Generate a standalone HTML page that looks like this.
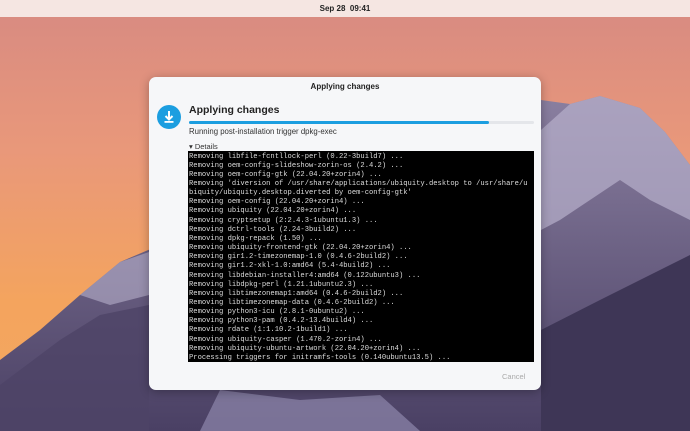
<!DOCTYPE html>
<html><head><meta charset="utf-8"><style>
*{margin:0;padding:0;box-sizing:border-box}
body{width:690px;height:431px;overflow:hidden;position:relative;font-family:"Liberation Sans",sans-serif;background:#d88a78}
#bg{position:absolute;left:0;top:0}
.top{position:absolute;left:0;top:0;width:690px;height:17px;background:#f5e6e2;text-align:center;font-size:8px;font-weight:bold;line-height:17px;color:#222}
.dlg{position:absolute;left:149px;top:77px;width:392px;height:313px;background:#f6f7f9;border-radius:7px;box-shadow:0 2px 10px rgba(0,0,0,.3)}
.tt{position:absolute;top:5px;width:100%;text-align:center;font-size:8px;font-weight:bold;color:#222}
.ic{position:absolute;left:8px;top:28px;width:24px;height:24px;border-radius:50%;background:#1c9ee0}
.h{position:absolute;left:40px;top:27px;font-size:10.5px;font-weight:bold;color:#222}
.pb{position:absolute;left:40px;top:44px;width:345px;height:3px;background:#e4e6ea;border-radius:2px}
.pb i{display:block;width:300px;height:3px;background:#1c9ee0;border-radius:2px}
.run{position:absolute;left:40px;top:50px;font-size:7.8px;color:#333}
.det{position:absolute;left:40px;top:65px;font-size:7.5px;color:#333}
.term{position:absolute;left:39px;top:74px;width:346px;height:211px;background:#000;color:#ddd;font-family:"Liberation Mono",monospace;font-size:7.15px;line-height:9.15px;padding:1.5px 1px;white-space:pre;overflow:hidden}
.cancel{position:absolute;left:353px;top:295px;font-size:7.5px;color:#aaa}
</style></head><body>
<svg id="bg" width="690" height="431" viewBox="0 0 690 431">
<defs>
<linearGradient id="sky" x1="0" y1="0" x2="0" y2="1">
<stop offset="0" stop-color="#d78a82"/><stop offset=".35" stop-color="#e9987a"/><stop offset=".7" stop-color="#f4a45e"/><stop offset="1" stop-color="#f2a860"/></linearGradient>
<linearGradient id="m1" x1="0" y1="0" x2="0" y2="1"><stop offset="0" stop-color="#8a7fa0"/><stop offset="1" stop-color="#4a4064"/></linearGradient>
</defs>
<rect width="690" height="431" fill="url(#sky)"/>
<polygon points="0,360 40,330 80,295 120,262 160,245 200,260 541,300 541,100 570,104 600,96 640,108 665,132 690,165 690,431 0,431" fill="url(#m1)"/>
<polygon points="541,130 570,104 600,96 640,108 665,132 690,165 690,220 650,200 620,180 590,200 560,220 541,230" fill="#b8b0cc" opacity=".7"/>
<polygon points="541,330 600,300 650,275 690,255 690,431 541,431" fill="#3e3656"/>
<polygon points="0,385 60,340 100,315 149,305 149,431 0,431" fill="#4d4366" opacity=".8"/>
<polygon points="80,295 120,262 149,252 149,295 110,305" fill="#b8b0cc" opacity=".6"/>
<polygon points="220,390 300,400 380,395 420,431 200,431" fill="#8e88ac" opacity=".7"/>
</svg>
<div class="top">Sep 28&nbsp; 09:41</div>
<div class="dlg">
<div class="tt">Applying changes</div>
<div class="ic"><svg width="24" height="24" viewBox="0 0 24 24"><path d="M12 6v8M8.5 11l3.5 3.5 3.5-3.5" stroke="#fff" stroke-width="2" fill="none"/><rect x="7.5" y="16" width="9" height="1.8" fill="#fff"/></svg></div>
<div class="h">Applying changes</div>
<div class="pb"><i></i></div>
<div class="run">Running post-installation trigger dpkg-exec</div>
<div class="det">▾ Details</div>
<div class="term">Removing libfile-fcntllock-perl (0.22-3build7) ...
Removing oem-config-slideshow-zorin-os (2.4.2) ...
Removing oem-config-gtk (22.04.20+zorin4) ...
Removing 'diversion of /usr/share/applications/ubiquity.desktop to /usr/share/u
biquity/ubiquity.desktop.diverted by oem-config-gtk'
Removing oem-config (22.04.20+zorin4) ...
Removing ubiquity (22.04.20+zorin4) ...
Removing cryptsetup (2:2.4.3-1ubuntu1.3) ...
Removing dctrl-tools (2.24-3build2) ...
Removing dpkg-repack (1.50) ...
Removing ubiquity-frontend-gtk (22.04.20+zorin4) ...
Removing gir1.2-timezonemap-1.0 (0.4.6-2build2) ...
Removing gir1.2-xkl-1.0:amd64 (5.4-4build2) ...
Removing libdebian-installer4:amd64 (0.122ubuntu3) ...
Removing libdpkg-perl (1.21.1ubuntu2.3) ...
Removing libtimezonemap1:amd64 (0.4.6-2build2) ...
Removing libtimezonemap-data (0.4.6-2build2) ...
Removing python3-icu (2.8.1-0ubuntu2) ...
Removing python3-pam (0.4.2-13.4build4) ...
Removing rdate (1:1.10.2-1build1) ...
Removing ubiquity-casper (1.470.2-zorin4) ...
Removing ubiquity-ubuntu-artwork (22.04.20+zorin4) ...
Processing triggers for initramfs-tools (0.140ubuntu13.5) ...</div>
<div class="cancel">Cancel</div>
</div>
</body></html>
